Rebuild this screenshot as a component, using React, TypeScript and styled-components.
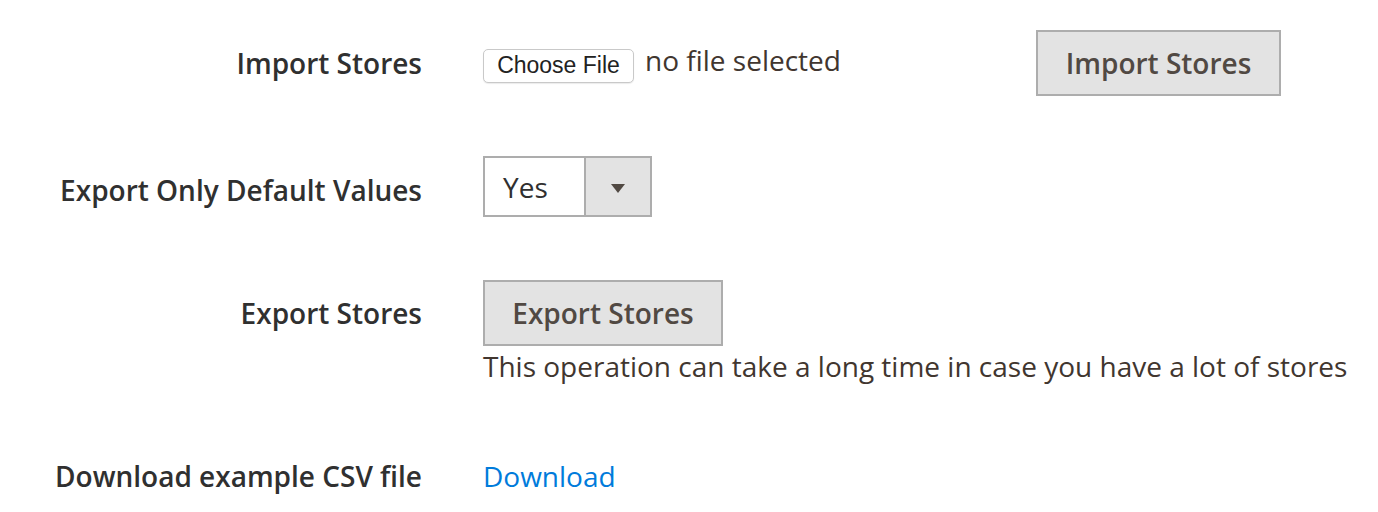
import React from 'react'
import styled, { createGlobalStyle } from 'styled-components'

const GlobalStyle = createGlobalStyle`
  html, body {
    margin: 0;
    padding: 0;
    background: #ffffff;
  }
  body {
    font-family: "Open Sans", "Liberation Sans", sans-serif;
    color: #41362f;
  }
`

const Form = styled.div`
  display: flex;
  flex-direction: column;
  padding-top: 30px;
`

const Field = styled.div<{ $top?: number }>`
  display: grid;
  grid-template-columns: 422px 1fr;
  column-gap: 61px;
  margin-top: ${p => p.$top || 0}px;
`

const Label = styled.label<{ $h: number; $shift?: number }>`
  box-sizing: border-box;
  display: flex;
  align-items: center;
  justify-content: flex-end;
  height: ${p => p.$h}px;
  padding-top: ${p => p.$shift || 0}px;
  font-size: 28px;
  font-weight: 600;
  color: #303030;
  white-space: nowrap;
`

const Control = styled.div`
  display: flex;
  flex-direction: column;
  align-items: flex-start;
`

const FileRow = styled.div`
  display: flex;
  align-items: center;
  height: 66px;
`

const FilePicker = styled.div`
  display: flex;
  align-items: center;
  width: 553px;
`

const ChooseButton = styled.button`
  box-sizing: border-box;
  width: 151px;
  height: 34px;
  margin-top: 5px;
  padding: 0;
  border: 1px solid #c9c9c9;
  border-radius: 5px;
  background: #ffffff;
  box-shadow: 0 1px 1px rgba(0, 0, 0, 0.08);
  font-family: "Liberation Sans", "DejaVu Sans", sans-serif;
  font-size: 23px;
  color: #222222;
`

const NoFile = styled.span`
  margin-left: 11px;
  margin-top: -6px;
  font-size: 28px;
  color: #41362f;
`

const ActionButton = styled.button<{ $w: number }>`
  box-sizing: border-box;
  width: ${p => p.$w}px;
  height: 66px;
  padding: 0;
  border: 2px solid #adadad;
  background: #e3e3e3;
  font-family: "Open Sans", "Liberation Sans", sans-serif;
  font-size: 28px;
  font-weight: 600;
  color: #514943;
`

const Select = styled.div`
  box-sizing: border-box;
  display: flex;
  width: 169px;
  height: 61px;
  border: 2px solid #adadad;
`

const SelectValue = styled.span`
  display: flex;
  align-items: center;
  width: 101px;
  padding-left: 18px;
  box-sizing: border-box;
  font-size: 28px;
  color: #303030;
  background: #ffffff;
  border-right: 2px solid #adadad;
`

const SelectArrow = styled.span`
  flex: 1;
  display: flex;
  align-items: center;
  justify-content: center;
  background: #e3e3e3;
  &::after {
    content: '';
    width: 0;
    height: 0;
    margin-top: 4px;
    border-left: 7px solid transparent;
    border-right: 7px solid transparent;
    border-top: 9px solid #514943;
  }
`

const Note = styled.div`
  font-size: 28px;
  line-height: 40px;
  color: #41362f;
  white-space: nowrap;
`

const Link = styled.a`
  display: flex;
  align-items: center;
  height: 40px;
  font-size: 28px;
  color: #007bdb;
  text-decoration: none;
`

export default function App() {
  return (
    <>
      <GlobalStyle />
      <Form>
        <Field>
          <Label $h={66}>Import Stores</Label>
          <FileRow>
            <FilePicker>
              <ChooseButton>Choose File</ChooseButton>
              <NoFile>no file selected</NoFile>
            </FilePicker>
            <ActionButton $w={245}>Import Stores</ActionButton>
          </FileRow>
        </Field>
        <Field $top={60}>
          <Label $h={61} $shift={6}>Export Only Default Values</Label>
          <Control>
            <Select>
              <SelectValue>Yes</SelectValue>
              <SelectArrow />
            </Select>
          </Control>
        </Field>
        <Field $top={63}>
          <Label $h={66}>Export Stores</Label>
          <Control>
            <ActionButton $w={240}>Export Stores</ActionButton>
            <Note>This operation can take a long time in case you have a lot of stores</Note>
          </Control>
        </Field>
        <Field $top={70}>
          <Label $h={40}>Download example CSV file</Label>
          <Control>
            <Link href="#">Download</Link>
          </Control>
        </Field>
      </Form>
    </>
  )
}
